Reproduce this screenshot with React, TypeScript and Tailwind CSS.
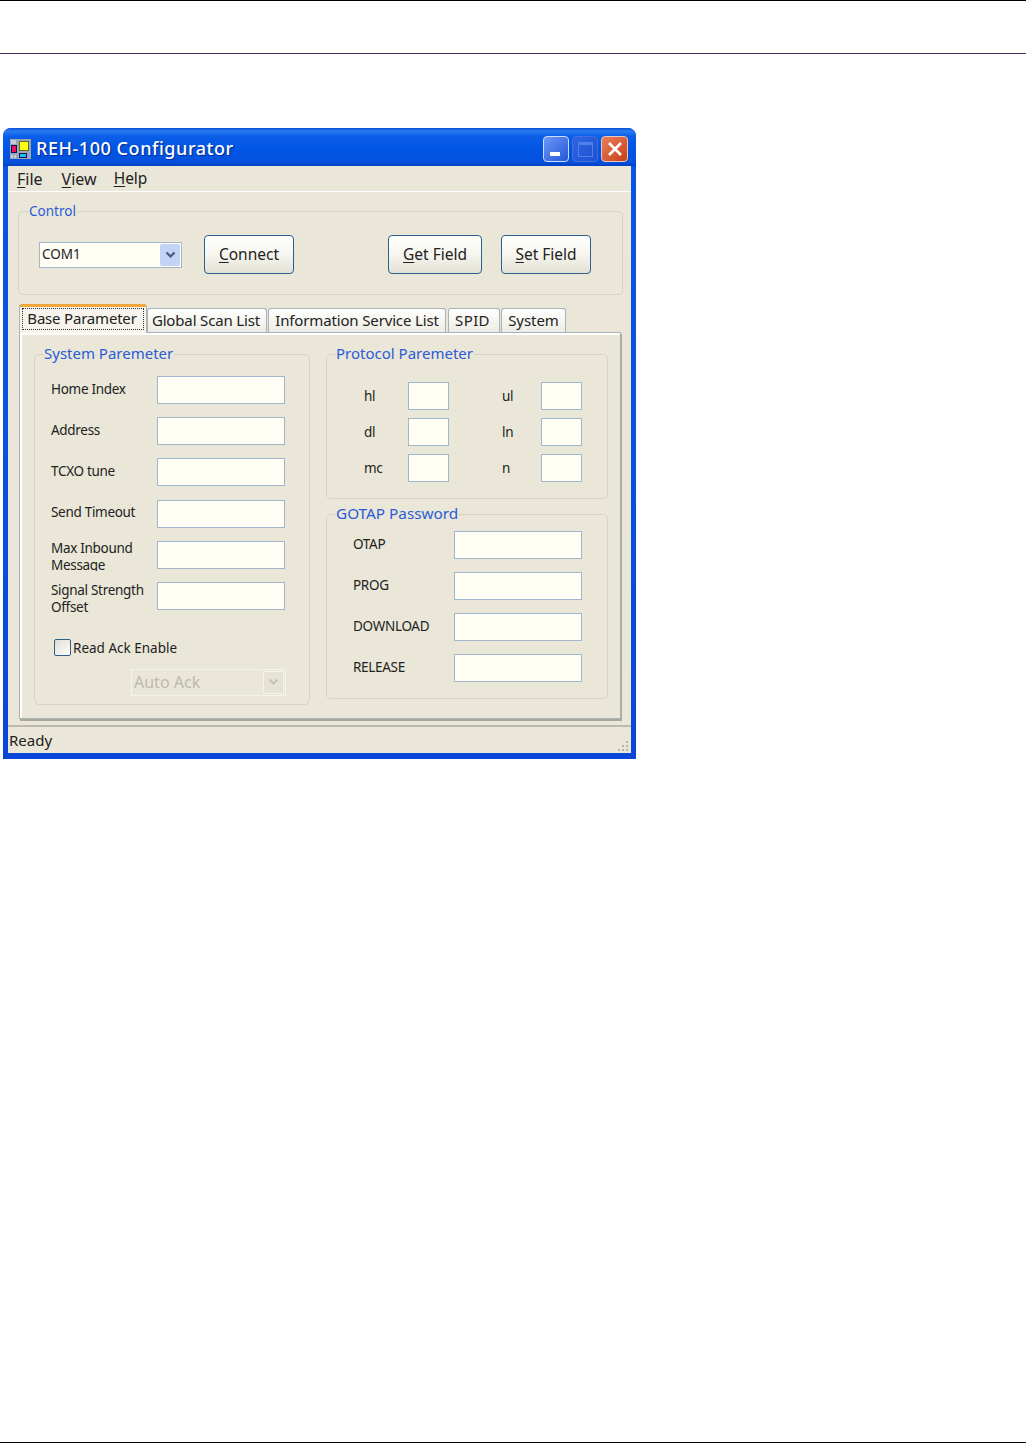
import React from 'react';

const uiFont = { fontFamily: '"Noto Sans", Tahoma, sans-serif' };

const systemFields = [
  { label: 'Home Index', cls: 'pb-[2px]' },
  { label: 'Address', cls: 'pb-[2px]' },
  { label: 'TCXO tune', cls: 'pb-[2px]' },
  { label: 'Send Timeout', cls: 'pb-[2px]' },
  { label: 'Max Inbound Message', cls: 'mt-[2px] h-[31px] overflow-hidden' },
  { label: 'Signal Strength Offset', cls: 'mt-[6px]' },
];
const protocolRows = [
  ['hl', 'ul'],
  ['dl', 'ln'],
  ['mc', 'n'],
];
const gotapFields = ['OTAP', 'PROG', 'DOWNLOAD', 'RELEASE'];

const Input = ({ className }: { className: string }) => (
  <div className={`h-[28px] border border-[#9fb6cc] bg-[#fffdf4] ${className}`} />
);

const Chevron = ({ color }: { color: string }) => (
  <svg width="11" height="8" viewBox="0 0 11 8" fill="none">
    <path d="M1.5 1.5 L5.5 5.5 L9.5 1.5" stroke={color} strokeWidth="2.2" />
  </svg>
);

const Group = ({ title, className, legendClass, children }: { title: string; className: string; legendClass: string; children: React.ReactNode }) => (
  <fieldset className={`rounded-[5px] border border-[#d6d3c3] ${className}`}>
    <legend className={`h-[20px] px-[1px] text-[#2b5bd7] ${legendClass}`}>{title}</legend>
    {children}
  </fieldset>
);

const PushButton = ({ hot, rest, className }: { hot: string; rest: string; className: string }) => (
  <button
    type="button"
    className={`h-[39px] rounded-[4px] border border-[#2f5f8f] bg-gradient-to-b from-[#ffffff] via-[#f6f5ee] to-[#e3e1d6] pt-px text-[15.5px] text-[#222] ${className}`}
  >
    <span className="underline underline-offset-2">{hot}</span>
    {rest}
  </button>
);

const Tab = ({ label, className }: { label: string; className: string }) => (
  <div className={`h-[25px] rounded-t-[3px] border border-b-0 border-[#a9b3b6] bg-gradient-to-b from-[#ffffff] to-[#ecebe2] text-center text-[15px] leading-[23px] text-[#222] ${className}`}>
    {label}
  </div>
);

export default function App() {
  return (
    <div className="flex h-[1444px] flex-col bg-white" style={uiFont}>
      <div className="h-[54px] border-t border-b border-t-black border-b-[#4a2a5a]" />

      {/* Window */}
      <div className="ml-[3px] mt-[74px] flex h-[631px] w-[633px] flex-col rounded-t-[8px] bg-gradient-to-b from-[#0a55e6] via-[#0a50e4] to-[#0a46d8] px-[5px] pb-[6px]">
        {/* Title bar */}
        <div className="flex h-[38px] items-center -mx-[5px] rounded-t-[8px] bg-[linear-gradient(180deg,#0a4fd8_0%,#2a7bf0_8%,#0a5ee8_22%,#0055e5_55%,#0451dc_90%,#0340c4_100%)] pl-[7px] pr-[8px] pt-[4px]">
          <svg width="21" height="20" viewBox="0 0 21 20" className="shrink-0">
            <rect width="21" height="20" fill="#9aa8b4" />
            <rect x="1" y="1" width="5" height="4" fill="#c4ccd4" />
            <rect x="1" y="6" width="6" height="8" fill="#101060" />
            <rect x="2" y="7" width="4" height="6" fill="#f0105a" />
            <rect x="9" y="2" width="10" height="10" fill="#6a6a20" />
            <rect x="10" y="3" width="8" height="8" fill="#ffff10" />
            <rect x="9" y="14" width="8" height="5" fill="#101060" />
            <rect x="10" y="15" width="6" height="3" fill="#18c0f0" />
            <rect x="1" y="16" width="2" height="3" fill="#c4ccd4" />
            <rect x="4" y="16" width="2" height="3" fill="#c4ccd4" />
          </svg>
          <span className="ml-[5px] flex-1 pb-[2px] text-[18px] font-medium tracking-[0.55px] text-white [text-shadow:1px_1px_1px_#0a2a90]">
            REH-100 Configurator
          </span>
          <div className="flex gap-[3px]">
            <div className="flex h-[26px] w-[26px] items-end rounded-[4px] border border-[#cfdcf8] bg-gradient-to-br from-[#6d97f5] to-[#2456d8] pb-[5px] pl-[6px]">
              <div className="h-[4px] w-[10px] bg-white" />
            </div>
            <div className="flex h-[26px] w-[26px] items-center justify-center rounded-[4px] border border-[#3f6fe0] bg-gradient-to-br from-[#2f66e4] to-[#1f50d0]">
              <div className="h-[15px] w-[15px] border border-t-[3px] border-[#4f7fe8]" />
            </div>
            <div className="flex h-[26px] w-[27px] items-center justify-center rounded-[4px] border border-[#e8c8b8] bg-gradient-to-br from-[#e8805a] to-[#c83c14]">
              <svg width="16" height="16" viewBox="0 0 16 16">
                <path d="M2 2 L14 14 M14 2 L2 14" stroke="#fff" strokeWidth="2.6" />
              </svg>
            </div>
          </div>
        </div>

        {/* Client area */}
        <div className="flex flex-1 flex-col bg-[#eae7d8]">
          <div className="flex h-[26px] items-center border-b border-white pl-[9px] text-[16px] text-[#222]">
            <span><span className="underline underline-offset-2">F</span>ile</span>
            <span className="ml-[19px]"><span className="underline underline-offset-2">V</span>iew</span>
            <span className="ml-[17px] pt-px text-[15.5px]"><span className="underline underline-offset-2">H</span>elp</span>
          </div>

          <Group title="Control" className="ml-[10px] mt-[9px] h-[94px] w-[605px]" legendClass="ml-[9px] text-[13.5px] leading-[20px]">
            <div className="flex items-center pl-[20px] pt-[14px]">
              <div className="flex h-[26px] w-[143px] items-center border border-[#9fb6cc] bg-[#fffdf4] p-[1px] pl-[2px]">
                <span className="flex-1 text-[13.5px] text-[#222]">COM1</span>
                <div className="flex h-full w-[20px] items-center justify-center rounded-[2px] bg-[#c3d3f6]">
                  <Chevron color="#44597f" />
                </div>
              </div>
              <PushButton hot="C" rest="onnect" className="ml-[22px] w-[90px]" />
              <PushButton hot="G" rest="et Field" className="ml-[94px] w-[94px]" />
              <PushButton hot="S" rest="et Field" className="ml-[19px] w-[90px]" />
            </div>
          </Group>

          {/* Tabs */}
          <div className="ml-[11px] mt-[10px] flex h-[28px] items-end">
            <div className="relative z-10 h-[29px] w-[128px] rounded-t-[3px] border-x border-[#a9b3b6] border-t-[3px] border-t-[#f0a83c] bg-[#f6f4ec] p-[2px]">
              <div className="h-[22px] -mt-[1px] border border-dotted border-[#333] pr-[2px] text-center text-[15px] leading-[18px] tracking-[-0.2px] text-[#222]">
                Base Parameter
              </div>
            </div>
            <Tab label="Global Scan List" className="w-[120px] pr-[2px] tracking-[-0.15px]" />
            <Tab label="Information Service List" className="ml-px w-[178px] tracking-[-0.15px]" />
            <Tab label="SPID" className="ml-[2px] w-[52px] pr-[3px] tracking-[0.4px]" />
            <Tab label="System" className="ml-px w-[65px] tracking-[-0.05px]" />
          </div>

          {/* Tab page */}
          <div className="ml-[11px] -mt-px flex h-[387px] w-[602px] gap-[16px] border border-[#a9b3b6] bg-[#eae7d8] pl-[14px] pt-[11px] shadow-[inset_2px_2px_0_#fff,1px_2px_0_#a8a89a]">
            <Group title="System Paremeter" className="h-[361px] w-[276px]" legendClass="ml-[8px] text-[15px] leading-[18px]">
              <div className="pl-[16px] pt-[12px] text-[13.5px] tracking-[-0.3px] text-[#222]">
                <div className="grid grid-cols-[106px_128px] gap-y-[13.2px]">
                  {systemFields.map(({ label, cls }) => (
                    <React.Fragment key={label}>
                      <div className="flex h-[28px] items-center">
                        <div className={`w-[100px] leading-[17px] ${cls}`}>{label}</div>
                      </div>
                      <Input className="w-[128px]" />
                    </React.Fragment>
                  ))}
                </div>
                <div className="ml-[3px] mt-[29px] flex h-[17px] items-center">
                  <div className="h-[17px] w-[17px] rounded-[2px] border border-[#2f5f8f] bg-gradient-to-br from-[#dedcd2] to-[#ffffff]" />
                  <span className="ml-[2px] pt-px tracking-normal">Read Ack Enable</span>
                </div>
                <div className="ml-[80px] mt-[13px] flex h-[27px] w-[155px] items-center border border-[#f4f3ea] p-[1px] pl-[2px]">
                  <span className="flex-1 text-[16px] tracking-normal text-[#bcb9ab]">Auto Ack</span>
                  <div className="flex h-full w-[21px] items-center justify-center border border-[#f4f3ea] bg-[#e6e3d6]">
                    <Chevron color="#c4c2b6" />
                  </div>
                </div>
              </div>
            </Group>

            <div className="flex flex-col gap-[5px]">
              <Group title="Protocol Paremeter" className="h-[155px] w-[282px]" legendClass="ml-[8px] text-[15px] leading-[18px]">
                <div className="flex flex-col gap-[8px] pl-[37px] pt-[18px] text-[13.5px] tracking-[-0.3px] text-[#222]">
                  {protocolRows.map(([left, right]) => (
                    <div key={left} className="flex items-center">
                      <span className="w-[44px]">{left}</span>
                      <Input className="w-[41px]" />
                      <span className="ml-[53px] w-[39px]">{right}</span>
                      <Input className="w-[41px]" />
                    </div>
                  ))}
                </div>
              </Group>
              <Group title="GOTAP Password" className="h-[195px] w-[282px]" legendClass="ml-[8px] text-[15.3px] leading-[18px]">
                <div className="flex flex-col gap-[13px] pl-[26px] pt-[7px] text-[13.5px] tracking-[-0.3px] text-[#222]">
                  {gotapFields.map((label) => (
                    <div key={label} className="flex items-center">
                      <span className="w-[101px] pb-[2px]">{label}</span>
                      <Input className="w-[128px]" />
                    </div>
                  ))}
                </div>
              </Group>
            </div>
          </div>

          {/* Status bar */}
          <div className="mt-[6px] flex flex-1 items-center justify-between border-t-2 border-t-[#bdbaa9] pl-px pr-[2px] text-[15px] text-[#222]">
            <span>Ready</span>
            <svg width="12" height="12" viewBox="0 0 12 12" className="mt-[12px]" fill="#b8b5a4">
              <rect x="9" y="1" width="2" height="2" />
              <rect x="5" y="5" width="2" height="2" />
              <rect x="9" y="5" width="2" height="2" />
              <rect x="1" y="9" width="2" height="2" />
              <rect x="5" y="9" width="2" height="2" />
              <rect x="9" y="9" width="2" height="2" />
            </svg>
          </div>
        </div>
      </div>

      <div className="mt-auto mb-px h-px bg-black" />
    </div>
  );
}
